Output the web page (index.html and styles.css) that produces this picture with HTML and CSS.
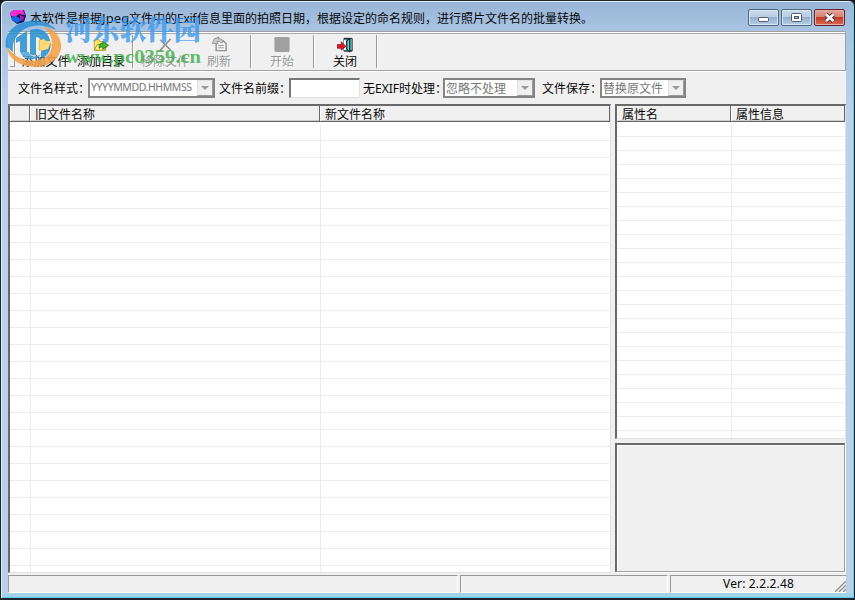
FILE: index.html
```html
<!DOCTYPE html>
<html lang="zh-CN">
<head>
<meta charset="utf-8">
<title>Exif</title>
<link rel="stylesheet" href="styles.css">
</head>
<body>
<div class="window">
  <header class="titlebar">
    <svg class="app-icon" width="18" height="18" viewBox="0 0 18 18"><path d="M1 5L5 2L15 2L17 8L15 14L8 16L3 12Z" fill="#1b1450"/><path d="M1 5L5 2H14L16 7L10 6L6 9L2 8Z" fill="#f32be0"/><path d="M3 9L7 8L13 12L8 15L3 12Z" fill="#1269e8"/><path d="M11 7L15 9L14 13L11 11Z" fill="#b513ba"/><path d="M6 6L10 4L12 6Z" fill="#f22e55"/></svg>
    <h1 class="title">本软件是根据<span class="lat jpeg">Jpeg</span>文件中的<span class="lat exif">Exif</span>信息里面的拍照日期，根据设定的命名规则，进行照片文件名的批量转换。</h1>
    <div class="controls">
      <button class="ctl"><svg width="29" height="15" viewBox="0 0 29 15"><rect x="9.5" y="7.5" width="10" height="4" rx="1" fill="#fff" stroke="#515a66"/></svg></button>
      <button class="ctl"><svg width="29" height="15" viewBox="0 0 29 15"><rect x="9.5" y="3.5" width="10" height="8" rx="1" fill="#fff" stroke="#515a66"/><rect x="12.5" y="6.5" width="4" height="2" fill="#9db6d2" stroke="#515a66"/></svg></button>
      <button class="ctl close"><svg width="29" height="15" viewBox="0 0 29 15"><path d="M11 4.5L18.5 11M18.5 4.5L11 11" stroke="#5c3438" stroke-width="4.500"/><path d="M11 4.5L18.5 11M18.5 4.5L11 11" stroke="#fff" stroke-width="2.500"/></svg></button>
    </div>
  </header>
  <main class="client">
    <nav class="toolbar">
      <i class="grip"></i>
      <button class="tool add"><svg width="18" height="18" viewBox="0 0 18 18"><path d="M2 4H7L9 6H13V15H2Z" fill="#ffdf70" stroke="#e8b74d"/><path d="M2 15L6 9H15L12 15Z" fill="#fff0a0" stroke="#e8b74d"/></svg><span>添加文件</span></button>
      <button class="tool dir"><svg width="18" height="18" viewBox="0 0 18 18"><path d="M2 4H7L8 6H14V15H2Z" fill="#ffe667" stroke="#c6a537"/><path d="M2 15L5 9H15L13 15Z" fill="#fff295" stroke="#a88c1b"/><path d="M7 10Q8 7 11 8V5.500L17 10L11 14V11.500Q9 11 7 13Z" fill="#4aba22" stroke="#126313" stroke-width=".8"/></svg><span>添加目录</span></button>
      <i class="sep"></i>
      <button class="tool remove off"><svg width="18" height="18" viewBox="0 0 18 18"><path d="M4 4L15 15M15 3L4 15" stroke="#929292" stroke-width="1.700"/></svg><span>移除文件</span></button>
      <button class="tool refresh off"><svg width="18" height="18" viewBox="0 0 18 18"><path d="M6 6V15.500H16.500V8L13.500 5H8" fill="#f5f5f5" stroke="#929292" stroke-width="1.500"/><path d="M8 10H14M8 12.500H14" stroke="#929292"/><path d="M2 8L4 3L9 1L8 3Q13 2 13 7H11Q10 5 7 5.500L8 8Z" fill="#ccc" stroke="#929292"/></svg><span>刷新</span></button>
      <i class="sep"></i>
      <button class="tool start off"><svg width="18" height="18" viewBox="0 0 18 18"><rect x="1" y="1" width="16" height="16" rx="1.500" fill="#a0a0a0"/></svg><span>开始</span></button>
      <i class="sep"></i>
      <button class="tool quit"><svg width="18" height="18" viewBox="0 0 18 18"><path d="M8 2.500H16.500V16H8Z" fill="#238080" stroke="#111"/><path d="M8 4H10V15H8Z" fill="#fff"/><path d="M11 5L14 3V17L11 14Z" fill="#75cccb" stroke="#111"/><path d="M15.500 3V15" stroke="#8bdbd8"/><path d="M1 9H5V6L10 11L5 15V13H1Z" fill="#df1725" stroke="#72121b" stroke-width=".7"/></svg><span>关闭</span></button>
      <i class="sep"></i>
    </nav>
    <section class="options">
      <label class="l1">文件名样式：</label>
      <div class="combo c1"><span class="pattern">YYYYMMDD.HHMMSS</span><b class="drop"></b></div>
      <label class="l2">文件名前缀：</label>
      <input class="prefix" aria-label="文件名前缀">
      <label class="l3">无<span class="lat upper">EXIF</span>时处理：</label>
      <div class="combo c2"><span>忽略不处理</span><b class="drop"></b></div>
      <label class="l4">文件保存：</label>
      <div class="combo c3"><span>替换原文件</span><b class="drop"></b></div>
    </section>
    <div class="content">
      <section class="list files">
        <div class="head"><span></span><span>旧文件名称</span><span>新文件名称</span></div>
        <div class="rows"><i></i><i></i><i></i></div>
      </section>
      <aside class="side">
        <section class="list props">
          <div class="head"><span>属性名</span><span>属性信息</span></div>
          <div class="rows"><i></i><i></i></div>
        </section>
        <div class="preview"></div>
      </aside>
    </div>
    <footer class="status">
      <div></div><div></div><div class="version"><span>Ver: 2.2.2.48</span><svg class="resize" width="11" height="11" viewBox="0 0 11 11"><path d="M0 11L11 0M4 11L11 4M8 11L11 8" stroke="#8f8f8f" stroke-width="1.300"/></svg></div>
    </footer>
  </main>
  <svg class="watermark" width="210" height="78" viewBox="0 0 210 78">
    <g opacity=".85">
      <path d="M43 26C58 29 64 43 60 52C55 65 38 70 24 65C13 62 7 54 7 46C13 57 27 63 39 60C54 56 57 38 43 26Z" fill="#f4a045"/>
      <path d="M6 48C3 31 19 19 38 21C47 22 53 26 56 30C44 24 32 24 23 30C15 36 12 43 13 52C10 50 8 46 6 48Z" fill="#298fd4"/>
      <path d="M16 38L27 31V52H20V41L16 43Z" fill="#278fd0"/>
      <path d="M30 30C42 26 53 34 50 49C49 53 46 57 41 59V43Q41 37 36 37V55Q32 56 30 54Z" fill="#278fd0"/>
      <path d="M20 52H29C30 57 36 58 41 54C38 61 25 62 20 52Z" fill="#4ba4dc"/>
      <path d="M40 40L44 39L46 41H51L48 49L40 51Z" fill="#ffda72"/>
    </g>
    <text class="wm-name" x="65" y="40" textLength="136" lengthAdjust="spacingAndGlyphs">河东软件园</text>
    <text class="wm-url" x="65" y="63" textLength="136" lengthAdjust="spacingAndGlyphs">www.pc0359.cn</text>
  </svg>
</div>
</body>
</html>
```
FILE: styles.css
```css
* { box-sizing: border-box; }
body { margin: 0; background: #17181e; overflow: hidden; font: 12px/16px "Noto Sans CJK SC", sans-serif; color: #080808; }
button, input { font: inherit; color: inherit; border: 0; padding: 0; margin: 0; }
svg { display: block; fill: none; }
.window { position: relative; width: 855px; height: 600px; padding: 2px 7px 6px 6px; border: solid #20232b; border-width: 1px 1px 2px; border-radius: 6px 6px 2px 2px; background: linear-gradient(#98b4d6, #a9c4e2 30px, #bad1ea 110px, #b9d0e9 590px, #8bd7ee); box-shadow: inset 1px 1px #e1effa, inset -1px -1px #63cce8; }
.titlebar { height: 28px; display: flex; align-items: center; }
.app-icon { margin: 0 5px 0 2px; }
.title { font-size: 12px; font-weight: 400; line-height: 18px; margin: 2px 0 0 -2px; white-space: nowrap; }
.lat { display: inline-block; font-family: "Noto Sans", sans-serif; font-size: 13px; line-height: 14px; }
.jpeg { width: 27px; letter-spacing: .1px; }
.exif { width: 20px; font-size: 12px; letter-spacing: -.3px; }
.controls { display: flex; gap: 2px; margin: 1px 2px 0 auto; }
.ctl { width: 31px; height: 17px; border: 1px solid #53677e; border-radius: 2px; background: linear-gradient(#cbdced, #b7cce2 47%, #94b0cf 50%, #b6cee5); box-shadow: inset 0 0 0 1px #d8e6f4; }
.close { border-color: #5f2630; background: linear-gradient(#e4a397, #d78272 47%, #bd3e2b 50%, #d86851); box-shadow: inset 0 0 0 1px #e8aea3; }
.client { width: 838px; height: 562px; margin-left: 1px; background: #f0f0f0; display: flex; flex-direction: column; }
.toolbar { height: 40px; flex: none; border: solid #a0a0a0; border-width: 1px 1px 1px 0; box-shadow: inset 0 1px #fff, inset 0 2px #a9a9a9, 0 1px #fff; display: flex; padding: 4px 0 0 2px; }
.grip { width: 5px; height: 31px; border-right: 1px solid #999; border-bottom: 1px solid #999; }
.tool { background: none; display: flex; flex-direction: column; align-items: center; gap: 1px; line-height: 14px; }
.tool svg { height: 17px; }
.add { width: 61px; }
.dir { width: 50px; margin-right: 5px; }
.remove { width: 62px; }
.refresh { width: 46px; margin-right: 7px; }
.start, .quit { width: 60px; }
.off { color: #969696; text-shadow: 1px 1px #fff; }
.sep { width: 1px; height: 33px; margin: -1px 1px 0; background: #999; box-shadow: 1px 0 #fff; }
.options { height: 33px; flex: none; display: flex; align-items: center; padding: 0 0 0 10px; }
.options label { white-space: nowrap; }
.l1 { width: 70px; }
.l2 { width: 70px; }
.l3 { width: 80px; }
.l4 { width: 58px; }
.upper { width: 25px; font-size: 12px; letter-spacing: 0; margin-right: -1px; }
.combo { height: 20px; border: 2px solid #858585; background: #fff; color: #777; display: flex; justify-content: space-between; align-items: center; padding-left: 1px; white-space: nowrap; }
.pattern { font: 10.5px/15px "Noto Sans", sans-serif; letter-spacing: -.4px; }
.c1 { width: 127px; margin-right: 4px; }
.c2 { width: 92px; margin-right: 7px; }
.c3 { width: 86px; }
.drop { width: 16px; height: 16px; flex: none; background: #f0f0f0; border: 1px solid #e3e3e3; border-right-color: #999; border-bottom-color: #999; display: grid; place-items: center; }
.drop::after { content: ""; border: solid transparent; border-width: 4px 4px 0; border-top-color: #999; }
.prefix { width: 71px; height: 20px; border: solid #e2e2e2; border-width: 2px 1px 1px 2px; border-top-color: #777; border-left-color: #777; background: #fff; margin-right: 3px; }
.content { height: 469px; display: flex; gap: 4px; }
.list { background: #fff; border: solid #e1e1e1; border-width: 2px 1px 1px 2px; border-top-color: #696969; border-left-color: #696969; display: flex; flex-direction: column; overflow: hidden; }
.files { width: 603px; }
.side { width: 231px; display: flex; flex-direction: column; gap: 4px; }
.props { height: 335px; }
.head, .rows { display: grid; }
.files .head, .files .rows { grid-template-columns: 20px 290px 1fr; }
.props .head, .props .rows { grid-template-columns: 114px 1fr; }
.head { height: 16px; flex: none; background: #f0f0f0; border-bottom: 1px solid #666; }
.head span { padding-left: 5px; line-height: 16px; border-right: 1px solid #666; box-shadow: inset 1px 0 #fff, inset 0 -1px #ccc; overflow: hidden; }
.rows { flex: 1; }
.props .rows { margin-top: 1px; background: repeating-linear-gradient(transparent 0 13px, #ececec 13px 14px); }
.files .rows { margin-top: 2px; background: repeating-linear-gradient(transparent 0 16px, #ececec 16px 17px); }
.rows i { border-right: 1px solid #ececec; transform: translateX(1px); }
.rows i:last-child { border: 0; }
.preview { height: 129px; border: 2px solid #696969; border-right: 1px solid #a0a0a0; border-bottom: 1px solid #a0a0a0; box-shadow: inset 1px 1px #fff, 1px 1px #fff; margin-right: 1px; }
.status { height: 19px; flex: none; display: grid; grid-template-columns: 450px 208px minmax(0, 1fr); gap: 2px; padding-top: 2px; }
.status div { border: solid #fff; border-width: 1px; border-top-color: #999; border-left-color: #999; }
.status .version { display: flex; align-items: end; border-right: 0; font: 12px/16px "Noto Sans", sans-serif; }
.version span { width: 175px; flex: none; white-space: nowrap; text-align: center; letter-spacing: .15px; }
.resize { flex: none; margin-left: -11px; }
.watermark { position: absolute; left: -1px; top: -1px; pointer-events: none; }
.wm-name { font: 900 27px "Noto Serif CJK SC", "Noto Sans CJK SC", serif; fill: #3c9bee; opacity: .8; }
.wm-url { font: 700 19px "Liberation Serif", serif; fill: #3eaf48; opacity: .8; }
```
